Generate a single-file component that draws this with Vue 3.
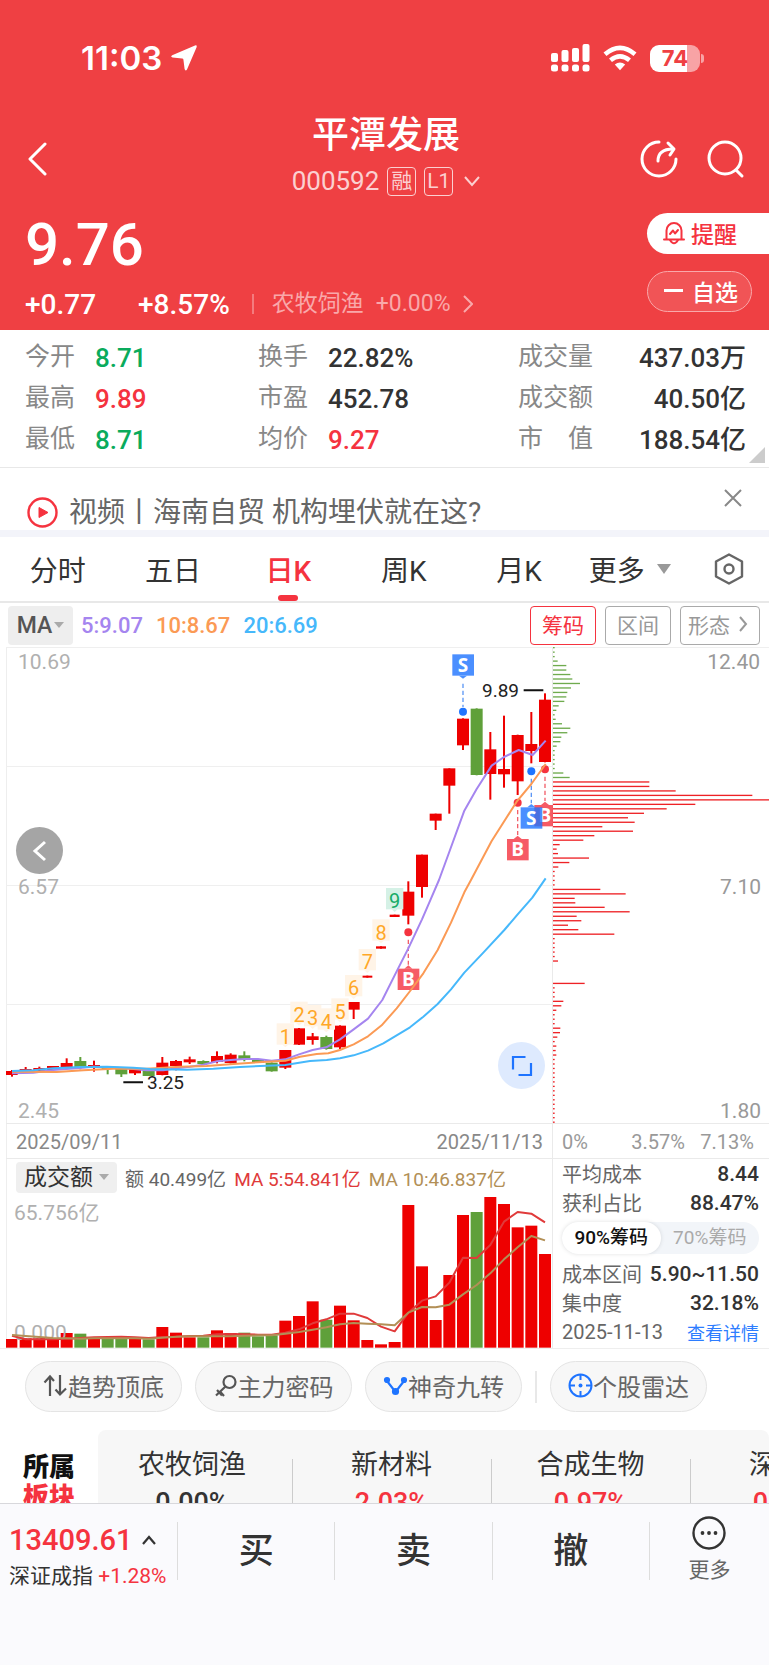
<script setup>
import { ref } from 'vue'

const stats = [
    [
        { label: '今开', value: '8.71', tone: 'down' },
        { label: '换手', value: '22.82%' },
        { label: '成交量', value: '437.03万' }
    ],
    [
        { label: '最高', value: '9.89', tone: 'up' },
        { label: '市盈', value: '452.78' },
        { label: '成交额', value: '40.50亿' }
    ],
    [
        { label: '最低', value: '8.71', tone: 'down' },
        { label: '均价', value: '9.27', tone: 'up' },
        { label: '市　值', value: '188.54亿' }
    ]
]

const tabs = ['分时', '五日', '日K', '周K', '月K']
const activeTab = ref('日K')
const chipRange = ref(90)

// the plot is drawn on a grid three times finer than its view box
const step = 41
const centre = (i) => 36 + i * step

// [up, body top, body bottom, wick top, wick bottom]
const candles = [
    [1, 1293, 1305, 1290, 1310],
    [1, 1287, 1295, 1281, 1297],
    [1, 1284, 1292, 1280, 1294],
    [1, 1278, 1290, 1278, 1292],
    [1, 1269, 1283, 1255, 1285],
    [0, 1263, 1282, 1251, 1288],
    [1, 1275, 1281, 1262, 1295],
    [0, 1280, 1287, 1278, 1303],
    [0, 1286, 1303, 1286, 1311],
    [1, 1287, 1300, 1285, 1305],
    [0, 1288, 1308, 1288, 1308],
    [1, 1268, 1305, 1251, 1306],
    [1, 1263, 1278, 1260, 1291],
    [1, 1258, 1267, 1250, 1272],
    [0, 1263, 1272, 1261, 1274],
    [1, 1248, 1266, 1234, 1270],
    [1, 1244, 1269, 1240, 1271],
    [0, 1246, 1260, 1234, 1264],
    [0, 1258, 1268, 1257, 1269],
    [0, 1268, 1294, 1267, 1295],
    [1, 1230, 1283, 1230, 1287],
    [1, 1165, 1214, 1164, 1215],
    [1, 1189, 1200, 1179, 1214],
    [0, 1191, 1227, 1187, 1229],
    [1, 1157, 1222, 1156, 1227],
    [1, 1086, 1109, 1086, 1137],
    [1, 1007, 1013, 1007, 1013],
    [1, 919, 926, 919, 926],
    [1, 824, 831, 824, 831],
    [1, 755, 827, 724, 853],
    [1, 644, 741, 644, 773],
    [1, 521, 542, 521, 570],
    [1, 385, 437, 385, 521],
    [1, 236, 316, 235, 330],
    [0, 206, 405, 205, 406],
    [1, 328, 402, 276, 479],
    [1, 387, 403, 227, 443],
    [1, 285, 424, 284, 465],
    [1, 312, 333, 216, 370],
    [1, 179, 366, 160, 367]
]

const ma5 = '36,1300 100,1298 160,1290 240,1284 280,1280 350,1283 400,1287 440,1291 490,1291 530,1285 570,1280 610,1274 651,1264 692,1260 733,1257 774,1257 815,1262 856,1258 897,1243 938,1230 979,1222 1020,1198 1061,1168 1104,1136 1147,1080 1193,988 1225,925 1266,838 1292,778 1317,720 1350,630 1393,512 1430,447 1475,377 1512,351 1556,330 1598,345 1637,302'
const ma10 = '36,1295 170,1296 250,1291 340,1286 440,1286 540,1280 620,1278 700,1272 800,1265 856,1262 900,1250 950,1242 985,1240 1020,1230 1061,1213 1104,1189 1145,1156 1190,1105 1235,1047 1270,1000 1313,930 1353,848 1393,757 1413,720 1475,603 1550,485 1594,432 1637,372'
const ma20 = '36,1293 100,1291 160,1285 240,1281 320,1280 400,1283 450,1287 560,1289 640,1286 720,1281 800,1277 856,1275 930,1263 980,1260 1020,1255 1061,1246 1104,1232 1150,1210 1190,1186 1230,1162 1270,1130 1313,1092 1353,1048 1393,998 1450,938 1513,870 1553,823 1597,773 1637,715'

// nine-turn counters above the candles
const counters = [1150, 1085, 1095, 1105, 1075, 1005, 927, 838, 744].map((top, i) => ({
    n: i + 1,
    x: centre(20 + i),
    top
}))

// trades: box top, dot position, side
const trades = [
    { side: 'S', i: 33, dot: 215, box: 43 },
    { side: 'B', i: 39, dot: 388, box: 495 },
    { side: 'S', i: 38, dot: 394, box: 502 },
    { side: 'B', i: 37, dot: 488, box: 597 },
    { side: 'B', i: 29, dot: 877, box: 986 }
].map((t) => {
    const x = centre(t.i)
    const below = t.box > t.dot
    return {
        ...t,
        x,
        tip: below
            ? `${x - 12},${t.box} ${x},${t.box - 10} ${x + 12},${t.box}`
            : `${x - 12},${t.box + 64} ${x},${t.box + 73} ${x + 12},${t.box + 64}`,
        from: below ? t.dot + 22 : t.box + 88,
        to: below ? t.box - 12 : t.dot - 14
    }
})

const chips = [
    6, 6, 6, 15, 41, 41, 53, 59, 82, 55, 44, 41, 35, 18, 11, 6, 9, 28, 53, 44, 26, 23, 12, 6, 6, 6, 6, 6, 32, 51,
    290, 290, 369, 599, 651, 428, 342, 274, 226, 246, 149, 241, 125, 92, 21, 12, 16, 109, 50, 17, 6, 6, 6, 6,
    143, 219, 66, 68, 156, 231, 72, 86, 46, 77, 185, 6, 6, 6, 6, 6, 16, 0, 0, 0, 0, 96, 6, 6, 6, 32, 26, 11, 6, 6, 6,
    23, 22, 14, 6, 11, 9, 11, 6, 6, 6, 6, 6, 6, 6, 6, 6, 6, 6, 6, 6, 6, 6
]
const profitStart = 30

const volumes = [
    26, 28, 29, 29, 44, 42, 27, 27, 28, 27, 25, 62, 45, 31, 31, 52, 44, 45, 34, 37,
    81, 95, 139, 84, 126, 82, 23, 10, 17, 428, 244, 83, 218, 398, 407, 452, 431, 361, 366, 281
]
const line = (ys) => ys.map((y, i) => `${centre(i)},${y - 195}`).join(' ')
const volMa5 = line([
    617, 628, 628, 628, 626, 624, 622, 621, 620, 622, 624, 621, 620, 618, 617, 613, 612, 613, 614, 614,
    608, 598, 580, 568, 551, 551, 564, 590, 604, 548, 512, 499, 458, 383, 384, 345, 275, 246, 251, 277
])
const volMa10 = line([
    615, 618, 621, 624, 625, 626, 625, 625, 625, 625, 626, 623, 620, 619, 619, 619, 619, 617, 616, 616,
    611, 606, 599, 592, 583, 579, 581, 583, 586, 548, 531, 532, 524, 493, 465, 430, 388, 352, 318, 331
])

const sectors = [
    { name: '农牧饲渔', change: '0.00%' },
    { name: '新材料', change: '2.03%', tone: 'up' },
    { name: '合成生物', change: '0.97%', tone: 'up' },
    { name: '深股通', change: '0.87%', tone: 'up' }
]
</script>

<template>
    <div class="app">
        <div class="content">
            <header class="header">
                <div class="status">
                    <div class="status__left">
                        <span>11:03</span>
                        <svg width="28" height="28" viewBox="0 0 28 28">
                            <path d="M25 1.5 Q27.5 0.8 26.6 3.3 L17 25.5 Q15.4 27.6 14.6 25 L13.4 15.6 Q13.2 14.5 12.2 14.4 L2.6 13.6 Q0 12.6 2.2 11.3 Z" fill="#fff" />
                        </svg>
                    </div>
                    <div class="status__right">
                        <svg width="40" height="28" viewBox="0 0 40 28" fill="#fff">
                            <rect x="1" y="9" width="7" height="9" rx="2" />
                            <rect x="11.500" y="6" width="7" height="12" rx="2" />
                            <rect x="22" y="4" width="7" height="14" rx="2" />
                            <rect x="32.500" y="0" width="7" height="18" rx="2" />
                            <rect x="1" y="20.500" width="7" height="7" rx="2.500" />
                            <rect x="11.500" y="20.500" width="7" height="7" rx="2.500" />
                            <rect x="22" y="20.500" width="7" height="7" rx="2.500" />
                            <rect x="32.500" y="20.500" width="7" height="7" rx="2.500" />
                        </svg>
                        <svg width="34" height="26" viewBox="0 0 34 26" fill="none" stroke="#fff" stroke-width="4.600">
                            <path d="M2 9.200 Q17 -3.500 32 9.200" />
                            <path d="M7.500 15.300 Q17 7.500 26.500 15.300" />
                            <path d="M11.800 19.600 Q17 15.500 22.200 19.600 L17 25.200 Z" fill="#fff" stroke="none" />
                        </svg>
                        <div class="battery"><span>74</span></div>
                    </div>
                </div>

                <div class="nav">
                    <button class="icon-btn" aria-label="返回">
                        <svg width="22" height="34" viewBox="0 0 22 34" fill="none" stroke="#fff" stroke-width="3" stroke-linecap="round" stroke-linejoin="round">
                            <path d="M18 2 L3 17 L18 32" />
                        </svg>
                    </button>
                    <div class="nav__title">
                        <h1>平潭发展</h1>
                        <div class="nav__code">
                            <span>000592</span>
                            <span class="tag">融</span>
                            <span class="tag">L1</span>
                            <svg width="16" height="12" viewBox="0 0 16 12" fill="none" stroke="#fbd0d1" stroke-width="2">
                                <path d="M1 2 L8 10 L15 2" />
                            </svg>
                        </div>
                    </div>
                    <div class="nav__actions">
                        <button class="icon-btn" aria-label="分享">
                            <svg width="40" height="40" viewBox="0 0 40 40" fill="none" stroke="#fff" stroke-width="3" stroke-linecap="round" stroke-linejoin="round">
                                <path d="M20 3 A17 17 0 1 0 37 20" />
                                <path d="M19 22 Q19 10 34 10" />
                                <path d="M29 4 L35 10 L31 16" />
                            </svg>
                        </button>
                        <button class="icon-btn" aria-label="搜索">
                            <svg width="40" height="40" viewBox="0 0 40 40" fill="none" stroke="#fff" stroke-width="3" stroke-linecap="round">
                                <circle cx="20" cy="19" r="16" />
                                <path d="M31 31 L37 37" />
                            </svg>
                        </button>
                    </div>
                </div>

                <div class="quote">
                    <div>
                        <div class="quote__price">9.76</div>
                        <div class="quote__change">
                            <span>+0.77</span>
                            <span>+8.57%</span>
                            <a href="#" class="quote__sector">
                                <span>农牧饲渔</span>
                                <span>+0.00%</span>
                                <svg width="10" height="18" viewBox="0 0 10 18" fill="none" stroke="#f9a8aa" stroke-width="2">
                                    <path d="M1 1 L9 9 L1 17" />
                                </svg>
                            </a>
                        </div>
                    </div>
                    <div class="quote__actions">
                        <button class="remind">
                            <svg width="22" height="24" viewBox="0 0 22 24" fill="none" stroke="#f5333f" stroke-width="2" stroke-linecap="round" stroke-linejoin="round">
                                <path d="M3.500 18 V9.500 A7.500 7.500 0 0 1 18.500 9.500 V18" />
                                <path d="M1 18.500 H21" />
                                <path d="M7 19 Q11 25.500 15 19" />
                                <path d="M7 13 L10 9.500 L12 12.500 L15 9" />
                            </svg>
                            提醒
                        </button>
                        <button class="watch">
                            <svg width="19" height="3" viewBox="0 0 19 3"><rect width="19" height="3" fill="#fff" /></svg>
                            自选
                        </button>
                    </div>
                </div>
            </header>

            <section class="stats">
                <div v-for="(row, r) in stats" :key="r" class="stats__row">
                    <div v-for="item in row" :key="item.label" class="stats__item">
                        <span class="stats__label">{{ item.label }}</span>
                        <span class="stats__value" :class="item.tone">{{ item.value }}</span>
                    </div>
                </div>
            </section>

            <section class="notice">
                <a href="#" class="notice__link">
                    <svg width="31" height="31" viewBox="0 0 31 31">
                        <circle cx="15.500" cy="15.500" r="14" fill="none" stroke="#f5333f" stroke-width="2.400" />
                        <path d="M12 10.500 L21 15.500 L12 20.500 Z" fill="#f5333f" stroke="#f5333f" stroke-linejoin="round" />
                    </svg>
                    视频丨海南自贸 机构埋伏就在这?
                </a>
                <button class="icon-btn notice__close" aria-label="关闭">
                    <svg width="18" height="18" viewBox="0 0 18 18" stroke="#888" stroke-width="2">
                        <path d="M1 1 L17 17 M17 1 L1 17" />
                    </svg>
                </button>
            </section>

            <nav class="tabs">
                <button
                    v-for="tab in tabs"
                    :key="tab"
                    class="tabs__item"
                    :class="{ 'tabs__item--active': tab === activeTab }"
                    @click="activeTab = tab"
                >
                    {{ tab }}
                </button>
                <button class="tabs__item tabs__item--more">更多<i class="caret caret--big"></i></button>
                <button class="tabs__item" aria-label="设置">
                    <svg width="30" height="32" viewBox="0 0 30 32" fill="none" stroke="#666" stroke-width="2.400" stroke-linejoin="round">
                        <path d="M15 1.500 L28 8.500 V23.500 L15 30.500 L2 23.500 V8.500 Z" />
                        <circle cx="15" cy="16" r="4.500" />
                    </svg>
                </button>
            </nav>

            <section class="indicator">
                <button class="indicator__pick">MA<i class="caret"></i></button>
                <span class="ma5">5:9.07</span>
                <span class="ma10">10:8.67</span>
                <span class="ma20">20:6.69</span>
                <div class="indicator__modes">
                    <button class="mode mode--active">筹码</button>
                    <button class="mode">区间</button>
                    <button class="mode">
                        形态
                        <svg width="9" height="16" viewBox="0 0 9 16" fill="none" stroke="#999" stroke-width="2">
                            <path d="M1 1 L7 8 L1 15" />
                        </svg>
                    </button>
                </div>
            </section>

            <section class="board">
                <div class="board__main">
                    <div class="kline">
                        <svg class="plot" viewBox="0 0 553 476">
                            <path d="M6 .5 H553 M6 119.500 H553 M6 238.500 H553 M6 357.500 H553" stroke="#efefef" stroke-width="1" />
                            <g class="axis">
                                <text x="18" y="22">10.69</text>
                                <text x="18" y="247">6.57</text>
                                <text x="18" y="471">2.45</text>
                            </g>
                            <g transform="translate(0 -7) scale(.33333)">
                                <g v-for="(c, i) in candles" :key="i" :fill="c[0] ? '#ee0000' : '#5fa03a'">
                                    <rect :x="Math.max(18, centre(i) - (c[2] - c[1] < 8 && i > 25 ? 15 : 18))" :y="c[1]" :width="i === 0 ? 35 : c[2] - c[1] < 8 && i > 25 ? 30 : 36" :height="c[2] - c[1]" />
                                    <rect :x="centre(i) - 3" :y="c[3]" width="6" :height="c[4] - c[3]" />
                                </g>
                                <g v-for="c in counters" :key="c.n" :fill="c.n === 9 ? '#d5f1e6' : '#fff4e7'">
                                    <rect :x="c.x - 26" :y="c.top" width="52" height="64" />
                                    <polygon :points="`${c.x - 9},${c.top + 64} ${c.x},${c.top + 72} ${c.x + 9},${c.top + 64}`" />
                                    <text :x="c.x" :y="c.top + 61" class="counter" :class="{ 'counter--last': c.n === 9 }">{{ c.n }}</text>
                                </g>
                                <g v-for="t in trades" :key="t.i" :class="'trade trade--' + t.side">
                                    <circle :cx="t.x" :cy="t.dot" r="12" />
                                    <line :x1="t.x" :x2="t.x" :y1="t.from" :y2="t.to" />
                                    <g opacity=".8">
                                        <rect :x="t.x - 32" :y="t.box" width="65" height="64" />
                                        <polygon :points="t.tip" />
                                    </g>
                                    <text :x="t.x" :y="t.box + 52">{{ t.side }}</text>
                                </g>
                                <g fill="none" stroke-width="6" stroke-linejoin="round">
                                    <polyline :points="ma5" stroke="#a585ef" />
                                    <polyline :points="ma10" stroke="#fb9a55" />
                                    <polyline :points="ma20" stroke="#46b8fb" />
                                </g>
                                <path d="M1571 151 H1630 M370 1327 H429" stroke="#111" stroke-width="6" />
                            </g>
                            <text x="519" y="50" class="extreme extreme--end">9.89</text>
                            <text x="147" y="442" class="extreme">3.25</text>
                        </svg>
                        <button class="round round--back" aria-label="向前">
                            <svg width="16" height="22" viewBox="0 0 16 22" fill="none" stroke="#fff" stroke-width="3">
                                <path d="M13 2 L3 11 L13 20" />
                            </svg>
                        </button>
                        <button class="round round--expand" aria-label="全屏">
                            <svg width="22" height="22" viewBox="0 0 22 22" fill="none" stroke="#1f74ff" stroke-width="2.200">
                                <path d="M14.500 2 H2 V14.500 M20 8 V20 H7.500" />
                            </svg>
                        </button>
                    </div>
                    <div class="dates">
                        <span>2025/09/11</span>
                        <span>2025/11/13</span>
                    </div>
                    <div class="volume__head">
                        <button class="volume__pick">成交额<i class="caret"></i></button>
                        <span>额 40.499亿</span>
                        <span class="vol5">MA 5:54.841亿</span>
                        <span class="vol10">MA 10:46.837亿</span>
                    </div>
                    <svg class="plot" viewBox="0 0 553 153">
                        <text x="14" y="25" class="axis">65.756亿</text>
                        <g transform="scale(.33333)">
                            <rect
                                v-for="(v, i) in volumes"
                                :key="i"
                                :x="Math.max(18, centre(i) - 18)"
                                :y="458 - v"
                                :width="i === 0 ? 34 : 36"
                                :height="v"
                                :fill="candles[i][0] ? '#ee0000' : '#5fa03a'"
                            />
                        </g>
                        <text x="14" y="145" class="axis">0.000</text>
                        <g transform="scale(.33333)" fill="none" stroke-width="6" stroke-linejoin="round">
                            <polyline :points="volMa5" stroke="#e03a3a" />
                            <polyline :points="volMa10" stroke="#b28f56" />
                        </g>
                    </svg>
                </div>

                <div class="board__side">
                    <svg class="plot" viewBox="0 0 216 476">
                        <path d="M0 .5 H216" stroke="#efefef" />
                        <g transform="translate(0 -7) scale(.33333)">
                            <rect
                                v-for="(w, i) in chips"
                                :key="i"
                                x="-1"
                                :y="21 + i * 13.43"
                                :width="w"
                                height="4"
                                :fill="i < profitStart ? '#6fab4e' : '#ee2226'"
                            />
                        </g>
                        <g class="axis axis--end">
                            <text x="207" y="22">12.40</text>
                            <text x="208" y="247">7.10</text>
                            <text x="208" y="471">1.80</text>
                        </g>
                    </svg>
                    <div class="scale">
                        <span>0%</span>
                        <span>3.57%</span>
                        <span>7.13%</span>
                    </div>
                    <div class="cost">
                        <div class="cost__row"><span>平均成本</span><b>8.44</b></div>
                        <div class="cost__row"><span>获利占比</span><b>88.47%</b></div>
                        <div class="switch">
                            <button :class="{ on: chipRange === 90 }" @click="chipRange = 90">90%筹码</button>
                            <button :class="{ on: chipRange === 70 }" @click="chipRange = 70">70%筹码</button>
                        </div>
                        <div class="cost__row"><span>成本区间</span><b>5.90~11.50</b></div>
                        <div class="cost__row"><span>集中度</span><b>32.18%</b></div>
                        <div class="cost__row"><span>2025-11-13</span><a href="#">查看详情</a></div>
                    </div>
                </div>
            </section>

            <section class="tools">
                <button class="tool">
                    <svg width="25" height="24" viewBox="0 0 25 24" fill="none" stroke="#555" stroke-width="2.200">
                        <path d="M7 22 V3 M1.500 8.500 L7 2.500 L11 7 M17 1 V20 M12.500 15.500 L17 20.500 L23 14.500" />
                    </svg>
                    趋势顶底
                </button>
                <button class="tool">
                    <svg width="24" height="24" viewBox="0 0 24 24" fill="none" stroke="#555" stroke-width="2.200">
                        <circle cx="15.500" cy="8" r="6" />
                        <path d="M11.500 12.500 L2 21.500 M6 17.500 L10 22 M3 16 L8 21.500" />
                    </svg>
                    主力密码
                </button>
                <button class="tool">
                    <svg width="25" height="22" viewBox="0 0 25 22" fill="#1f74ff" stroke="#1f74ff" stroke-width="2.200">
                        <path d="M4 6 L12.500 17 L21 6" fill="none" />
                        <circle cx="4" cy="5" r="2" />
                        <circle cx="21" cy="5" r="2" />
                        <circle cx="12.500" cy="16.500" r="2.500" />
                    </svg>
                    神奇九转
                </button>
                <i class="tools__split"></i>
                <button class="tool">
                    <svg width="25" height="25" viewBox="0 0 25 25" fill="none" stroke="#1f74ff" stroke-width="2">
                        <circle cx="12.500" cy="12.500" r="11" />
                        <path d="M12.500 1.500 V7 M12.500 18 V23.500 M1.500 12.500 H7 M18 12.500 H23.500" />
                        <circle cx="12.500" cy="12.500" r="2" fill="#1f74ff" stroke="none" />
                    </svg>
                    个股雷达
                </button>
            </section>

            <section class="sectors">
                <div class="sectors__title">
                    <span>所属</span>
                    <span class="up">板块</span>
                </div>
                <div class="sectors__list">
                    <a v-for="s in sectors" :key="s.name" href="#" class="sector">
                        <span>{{ s.name }}</span>
                        <span class="sector__change" :class="s.tone">{{ s.change }}</span>
                    </a>
                </div>
            </section>
        </div>

        <footer class="footer">
            <a href="#" class="index">
                <span class="index__value">
                    13409.61
                    <svg width="14" height="10" viewBox="0 0 14 10" fill="none" stroke="#333" stroke-width="2.200">
                        <path d="M1 9 L7 2 L13 9" />
                    </svg>
                </span>
                <span class="index__name">深证成指 <em class="up">+1.28%</em></span>
            </a>
            <button class="trade-btn">买</button>
            <button class="trade-btn">卖</button>
            <button class="trade-btn">撤</button>
            <button class="more">
                <svg width="34" height="34" viewBox="0 0 34 34">
                    <circle cx="17" cy="17" r="15.500" fill="none" stroke="#333" stroke-width="2.400" />
                    <g fill="#333">
                        <circle cx="10.500" cy="17" r="1.900" />
                        <circle cx="17" cy="17" r="1.900" />
                        <circle cx="23.500" cy="17" r="1.900" />
                    </g>
                </svg>
                更多
            </button>
        </footer>
    </div>
</template>

<style>
body {
    margin: 0;
    background: #fff;
}
</style>

<style scoped>
.app {
    display: flex;
    flex-direction: column;
    height: 100vh;
    font-family: Roboto, "Noto Sans CJK SC", sans-serif;
    color: #333;
    background: #fff;
}

.app * {
    box-sizing: border-box;
}

.content {
    flex: 1;
    min-height: 0;
    overflow: hidden;
}

button {
    margin: 0;
    padding: 0;
    border: 0;
    background: none;
    font: inherit;
    color: inherit;
    cursor: pointer;
}

a {
    color: inherit;
    text-decoration: none;
}

svg {
    display: block;
    flex-shrink: 0;
}

.up {
    color: #f5333f;
}

.down {
    color: #0aab5c;
}

.icon-btn {
    display: flex;
}

/* header */
.header {
    background: #ef4043;
    color: #fff;
}

.status {
    display: flex;
    justify-content: space-between;
    align-items: center;
    height: 110px;
    padding: 6px 65px 0 81px;
}

.status__left {
    display: flex;
    align-items: center;
    gap: 8px;
    font-family: Inter, sans-serif;
    font-size: 33px;
    font-weight: 600;
}

.status__right {
    display: flex;
    align-items: center;
    gap: 13px;
}

.battery {
    position: relative;
    width: 50px;
    height: 27px;
    border-radius: 9px;
    background: linear-gradient(to right, #fff 74%, #f8a3a5 74%);
    color: #ef4043;
    font-family: Inter, sans-serif;
    font-size: 22px;
    font-weight: 700;
    line-height: 27px;
    text-align: center;
    margin-right: 4px;
}

.battery::after {
    content: "";
    position: absolute;
    right: -4px;
    top: 9px;
    width: 3px;
    height: 9px;
    border-radius: 0 3px 3px 0;
    background: #f8a3a5;
}

.nav {
    display: grid;
    grid-template-columns: 1fr auto 1fr;
    align-items: center;
    height: 98px;
    padding: 0 24px 0 27px;
}

.nav__title {
    align-self: start;
    text-align: center;
}

.nav__title h1 {
    margin: 0;
    font-size: 37px;
    font-weight: 500;
    line-height: 52px;
}

.nav__code {
    display: flex;
    align-items: center;
    justify-content: center;
    gap: 8px;
    height: 38px;
    font-size: 26px;
    color: #fbd0d1;
}

.tag {
    width: 29px;
    height: 29px;
    border: 1px solid #fbd0d1;
    border-radius: 4px;
    font-size: 21px;
    line-height: 26px;
    text-align: center;
}

.nav__code svg {
    margin-left: 3px;
}

.nav__actions {
    display: flex;
    justify-content: flex-end;
    gap: 26px;
}

.quote {
    display: flex;
    justify-content: space-between;
    height: 122px;
    padding-left: 25px;
}

.quote__price {
    font-size: 60px;
    font-weight: 500;
    line-height: 74px;
}

.quote__change {
    display: flex;
    align-items: center;
    gap: 42px;
    height: 44px;
    font-size: 28px;
    font-weight: 500;
}

.quote__sector {
    display: flex;
    align-items: center;
    gap: 12px;
    margin-left: -20px;
    padding-left: 18px;
    font-size: 23px;
    font-weight: 400;
    line-height: 20px;
    color: #f9a8aa;
    border-left: 2px solid #f47b7e;
}

.quote__actions {
    display: flex;
    flex-direction: column;
    gap: 17px;
    width: 122px;
    padding-top: 5px;
}

.remind,
.watch {
    display: flex;
    align-items: center;
    gap: 6px;
    height: 41px;
    padding: 0 0 2px 16px;
    border-radius: 21px;
    font-size: 23px;
    font-weight: 500;
}

.remind {
    border-radius: 21px 0 0 21px;
    background: #fff;
    color: #f5333f;
}

.watch {
    gap: 9px;
    width: 105px;
    border: 1px solid #f9a8aa;
    background: #f15456;
}

/* stats */
.stats {
    position: relative;
    padding: 7px 23px 7px 25px;
    border-bottom: 1px solid #e8e8e8;
}

.stats::after {
    content: "";
    position: absolute;
    right: 4px;
    bottom: 4px;
    border: 8px solid;
    border-color: transparent #ccc #ccc transparent;
}

.stats__row {
    display: grid;
    grid-template-columns: 233fr 260fr 228fr;
    height: 41px;
    align-items: center;
}

.stats__item {
    display: flex;
    align-items: center;
    gap: 20px;
    line-height: 36px;
}

.stats__item:last-child {
    justify-content: space-between;
}

.stats__label {
    padding-bottom: 2px;
    font-size: 25px;
    color: #888;
}

.stats__value {
    font-size: 26px;
    font-weight: 500;
}

/* notice */
.notice {
    display: flex;
    justify-content: space-between;
    height: 69px;
    padding: 0 27px;
    border-bottom: 7px solid #f3f4fa;
}

.notice__link {
    display: flex;
    align-items: center;
    gap: 11px;
    height: 62px;
    padding-top: 27px;
    font-size: 28px;
    line-height: 35px;
    color: #666;
    white-space: nowrap;
}

.notice__close {
    margin-top: 21px;
    align-self: flex-start;
}

/* tabs */
.tabs {
    display: grid;
    grid-template-columns: repeat(5, 15%) 1fr 80px;
    height: 66px;
    border-bottom: 2px solid #e8e8e8;
}

.tabs__item {
    position: relative;
    display: flex;
    align-items: center;
    justify-content: center;
    font-size: 28px;
    color: #333;
}

.tabs__item--more {
    padding-right: 6px;
}

.tabs__item--active {
    color: #f5333f;
    font-weight: 500;
}

.tabs__item--active::after {
    content: "";
    position: absolute;
    bottom: 0;
    width: 20px;
    height: 6px;
    border-radius: 3px;
    background: #f5333f;
}

.caret {
    margin-left: 2px;
    border: 5px solid transparent;
    border-top: 6px solid #aaa;
    border-bottom: 0;
}

.caret--big {
    margin-left: 12px;
    border-width: 10px 7px 0;
    border-top-color: #999;
}

/* indicator bar */
.indicator {
    display: flex;
    align-items: center;
    gap: 13px;
    height: 44px;
    padding: 0 9px 0 8px;
    font-size: 22px;
    font-weight: 500;
}

.indicator__pick {
    display: flex;
    align-items: center;
    justify-content: center;
    width: 65px;
    height: 39px;
    margin-right: -5px;
    border-radius: 4px;
    background: #eee;
    font-size: 23px;
    color: #555;
}

.ma5 {
    color: #a585ef;
}

.ma10 {
    color: #fb9a55;
}

.ma20 {
    color: #46b8fb;
}

.indicator__modes {
    display: flex;
    gap: 9px;
    margin-left: auto;
}

.mode {
    display: flex;
    align-items: center;
    justify-content: center;
    gap: 9px;
    height: 39px;
    padding: 0 11px 2px;
    border: 1px solid #aaa;
    border-radius: 4px;
    font-size: 21px;
    font-weight: 400;
    color: #999;
}

.mode:last-child {
    padding: 0 11px 2px 7px;
}

.mode--active {
    border-color: #f5333f;
    color: #f5333f;
}

/* charts */
.board {
    display: grid;
    grid-template-columns: 553fr 216fr;
    border-bottom: 1px solid #eee;
}

.board__main,
.board__side {
    min-width: 0;
}

.board__main {
    background: linear-gradient(#eee, #eee) 6px 0 / 1px 100% no-repeat;
}

.board__side {
    box-shadow: -1px 0 0 #eaeaea;
}

.plot {
    width: 100%;
    height: auto;
}

.kline {
    position: relative;
}

.axis {
    font-size: 21px;
    fill: #b0b0b0;
}

.axis--end {
    text-anchor: end;
    fill: #999;
}

.extreme {
    font-size: 19px;
    fill: #222;
}

.extreme--end {
    text-anchor: end;
}

.counter {
    font-size: 60px;
    fill: #ffa726;
    text-anchor: middle;
}

.counter--last {
    fill: #17ab67;
}

.trade text {
    font-family: "Open Sans", sans-serif;
    font-size: 57px;
    font-weight: 700;
    fill: #fff;
    text-anchor: middle;
}

.trade line {
    stroke-width: 4;
    stroke-dasharray: 13 8;
}

.trade--S {
    fill: #1f74ff;
    stroke: none;
}

.trade--S line {
    stroke: #5d97f5;
}

.trade--B {
    fill: #f5333f;
}

.trade--B line {
    stroke: #f2606a;
}

.round {
    position: absolute;
    display: flex;
    align-items: center;
    justify-content: center;
    width: 47px;
    height: 47px;
    border-radius: 50%;
}

.round--back {
    left: 16px;
    top: 180px;
    background: #a5a5a5;
}

.round--expand {
    right: 8px;
    bottom: 34px;
    background: #deeafe;
}

.dates,
.scale {
    display: flex;
    justify-content: space-between;
    align-items: center;
    height: 36px;
    padding: 2px 10px 0 16px;
    border-top: 1px solid #eaeaea;
    border-bottom: 1px solid #eaeaea;
    font-size: 20px;
    color: #888;
}

.dates {
    margin-left: 6px;
    padding-left: 10px;
}

.scale {
    padding: 2px 15px 0 9px;
    color: #999;
}

.scale span:first-child {
    margin-right: 28px;
}

.volume__head {
    display: flex;
    align-items: center;
    gap: 8px;
    height: 36px;
    padding-left: 16px;
    font-size: 19px;
    color: #666;
    white-space: nowrap;
}

.volume__pick {
    display: flex;
    align-items: center;
    justify-content: center;
    gap: 4px;
    width: 101px;
    height: 31px;
    border-radius: 4px;
    background: #efefef;
    font-size: 23px;
    line-height: 31px;
    color: #333;
}

.vol5 {
    color: #e03a3a;
}

.vol10 {
    color: #b28f56;
}

.cost {
    padding: 0 10px 0 9px;
}

.cost__row {
    display: flex;
    justify-content: space-between;
    align-items: center;
    height: 29px;
    font-size: 20px;
    color: #666;
    white-space: nowrap;
}

.cost__row b {
    font-size: 21px;
    font-weight: 500;
    color: #333;
}

.cost__row a {
    font-size: 18px;
    color: #2d7dff;
}

.switch {
    display: flex;
    height: 32px;
    margin: 5px 0;
    border-radius: 16px;
    background: #f2f5f9;
}

.switch button {
    flex: 1;
    border-radius: 16px;
    font-size: 19px;
    line-height: 32px;
    color: #aaa;
}

.switch .on {
    background: #fff;
    box-shadow: 0 0 4px rgba(0, 0, 0, 0.12);
    font-weight: 500;
    color: #111;
}

/* tools */
.tools {
    display: flex;
    align-items: center;
    gap: 13px;
    padding: 12px 25px 18px;
}

.tool {
    display: flex;
    align-items: center;
    justify-content: center;
    width: 157px;
    height: 51px;
    padding-bottom: 2px;
    border: 1px solid #e4e4e4;
    border-radius: 26px;
    background: #f7f7f7;
    font-size: 24px;
    color: #666;
    white-space: nowrap;
}

.tools__split {
    width: 2px;
    height: 32px;
    background: #e8e8e8;
}

/* sectors */
.sectors {
    display: flex;
}

.sectors__title {
    display: flex;
    flex-direction: column;
    flex: 0 0 98px;
    padding: 22px 0 0 23px;
    font-size: 26px;
    font-weight: 900;
    line-height: 30px;
    color: #111;
}

.sectors__title .up {
    color: #f5333f;
}

.sectors__list {
    display: flex;
    flex: 1;
    min-width: 0;
    overflow: hidden;
    border-radius: 8px 8px 0 0;
    background: #f7f7f7;
}

.sector {
    position: relative;
    display: flex;
    flex-direction: column;
    align-items: center;
    flex: 0 0 199px;
    padding-top: 15px;
    font-size: 27px;
    line-height: 40px;
}

.sector:first-child {
    flex-basis: 194px;
    padding-right: 6px;
}

.sector__change {
    line-height: 36px;
    font-weight: 500;
}

.sector + .sector::before {
    content: "";
    position: absolute;
    left: 0;
    top: 29px;
    bottom: 0;
    width: 1px;
    background: #ccc;
}

/* footer */
.footer {
    display: grid;
    grid-template-columns: 177px 1fr 1fr 1fr 120px;
    align-items: start;
    height: 162px;
    border-top: 1px solid #d8d8dc;
    background: #fafafd;
}

.index {
    display: flex;
    flex-direction: column;
    padding: 17px 0 0 9px;
    white-space: nowrap;
}

.index__value {
    display: flex;
    align-items: center;
    gap: 10px;
    height: 38px;
    font-size: 29px;
    font-weight: 500;
    color: #f5333f;
}

.index__name {
    font-size: 21px;
    line-height: 34px;
}

.index__name em {
    font-style: normal;
}

.trade-btn,
.more {
    height: 58px;
    margin-top: 18px;
    border-left: 1px solid #ddd;
    font-size: 35px;
    font-weight: 500;
    line-height: 60px;
}

.more {
    display: flex;
    flex-direction: column;
    align-items: center;
    font-size: 21px;
    font-weight: 400;
    line-height: 40px;
    color: #666;
}

.more svg {
    margin-top: -6px;
}
</style>
